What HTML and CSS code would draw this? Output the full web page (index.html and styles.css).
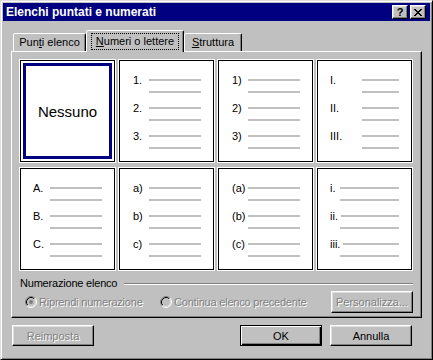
FILE: index.html
```html
<!DOCTYPE html>
<html lang="it">
<head>
<meta charset="utf-8">
<title>Elenchi puntati e numerati</title>
<link rel="stylesheet" href="styles.css">
</head>
<body>
<div class="window">
  <div class="titlebar">
    <span class="title">Elenchi puntati e numerati</span>
    <div class="tb-buttons">
      <span class="tb-btn help">?</span>
      <span class="tb-btn close"><svg width="8" height="7" viewBox="0 0 8 7"><path d="M0 0h2v1H0z M6 0h2v1H6z M1 1h2v1H1z M5 1h2v1H5z M2 2h4v1H2z M3 3h2v1H3z M2 4h4v1H2z M1 5h2v1H1z M5 5h2v1H5z M0 6h2v1H0z M6 6h2v1H6z" fill="#000"/></svg></span>
    </div>
  </div>
  <div class="content">
    <div class="tabs">
      <div class="tab t1">Pun<u>t</u>i elenco</div>
      <div class="tab active t2"><span class="focus"><u>N</u>umeri o lettere</span></div>
      <div class="tab t3"><u>S</u>truttura</div>
    </div>
    <div class="panel">
      <div class="grid">
        <div class="cell selected"><div class="none">Nessuno</div></div>
        <div class="cell list w13 p13">
          <div class="grp"><div class="r1"><span class="lbl">1.</span><span class="ln"></span></div><div class="r2"><span class="ln"></span></div></div>
          <div class="grp"><div class="r1"><span class="lbl">2.</span><span class="ln"></span></div><div class="r2"><span class="ln"></span></div></div>
          <div class="grp"><div class="r1"><span class="lbl">3.</span><span class="ln"></span></div><div class="r2"><span class="ln"></span></div></div>
        </div>
        <div class="cell list w13 p13">
          <div class="grp"><div class="r1"><span class="lbl">1)</span><span class="ln"></span></div><div class="r2"><span class="ln"></span></div></div>
          <div class="grp"><div class="r1"><span class="lbl">2)</span><span class="ln"></span></div><div class="r2"><span class="ln"></span></div></div>
          <div class="grp"><div class="r1"><span class="lbl">3)</span><span class="ln"></span></div><div class="r2"><span class="ln"></span></div></div>
        </div>
        <div class="cell list w29">
          <div class="grp"><div class="r1"><span class="lbl">I.</span><span class="ln"></span></div><div class="r2"><span class="ln"></span></div></div>
          <div class="grp"><div class="r1"><span class="lbl">II.</span><span class="ln"></span></div><div class="r2"><span class="ln"></span></div></div>
          <div class="grp"><div class="r1"><span class="lbl">III.</span><span class="ln"></span></div><div class="r2"><span class="ln"></span></div></div>
        </div>
        <div class="cell list w14">
          <div class="grp"><div class="r1"><span class="lbl">A.</span><span class="ln"></span></div><div class="r2"><span class="ln"></span></div></div>
          <div class="grp"><div class="r1"><span class="lbl">B.</span><span class="ln"></span></div><div class="r2"><span class="ln"></span></div></div>
          <div class="grp"><div class="r1"><span class="lbl">C.</span><span class="ln"></span></div><div class="r2"><span class="ln"></span></div></div>
        </div>
        <div class="cell list w13 p13">
          <div class="grp"><div class="r1"><span class="lbl">a)</span><span class="ln"></span></div><div class="r2"><span class="ln"></span></div></div>
          <div class="grp"><div class="r1"><span class="lbl">b)</span><span class="ln"></span></div><div class="r2"><span class="ln"></span></div></div>
          <div class="grp"><div class="r1"><span class="lbl">c)</span><span class="ln"></span></div><div class="r2"><span class="ln"></span></div></div>
        </div>
        <div class="cell list w13 p13">
          <div class="grp"><div class="r1"><span class="lbl">(a)</span><span class="ln"></span></div><div class="r2"><span class="ln"></span></div></div>
          <div class="grp"><div class="r1"><span class="lbl">(b)</span><span class="ln"></span></div><div class="r2"><span class="ln"></span></div></div>
          <div class="grp"><div class="r1"><span class="lbl">(c)</span><span class="ln"></span></div><div class="r2"><span class="ln"></span></div></div>
        </div>
        <div class="cell list w7">
          <div class="grp"><div class="r1"><span class="lbl">i.</span><span class="ln"></span></div><div class="r2"><span class="ln"></span></div></div>
          <div class="grp"><div class="r1"><span class="lbl">ii.</span><span class="ln"></span></div><div class="r2"><span class="ln"></span></div></div>
          <div class="grp"><div class="r1"><span class="lbl">iii.</span><span class="ln"></span></div><div class="r2"><span class="ln"></span></div></div>
        </div>
      </div>
      <div class="group-head"><span>Numerazione elenco</span><span class="etch"></span></div>
      <div class="radio-row">
        <div class="radio first">
          <svg class="rb" width="12" height="12" viewBox="0 0 12 12"><circle cx="6" cy="6" r="4.5" fill="#c0c0c0"/><path d="M2.11 9.89A5.5 5.5 0 0 1 9.89 2.11" fill="none" stroke="#808080"/><path d="M9.89 2.11A5.5 5.5 0 0 1 2.11 9.89" fill="none" stroke="#fff"/><path d="M2.82 9.18A4.5 4.5 0 0 1 9.18 2.82" fill="none" stroke="#000"/><path d="M9.18 2.82A4.5 4.5 0 0 1 2.82 9.18" fill="none" stroke="#dfdfdf"/><circle cx="6" cy="6" r="2" fill="#808080"/></svg>
          <span class="dis">Riprendi numerazione</span>
        </div>
        <div class="radio">
          <svg class="rb" width="12" height="12" viewBox="0 0 12 12"><circle cx="6" cy="6" r="4.5" fill="#c0c0c0"/><path d="M2.11 9.89A5.5 5.5 0 0 1 9.89 2.11" fill="none" stroke="#808080"/><path d="M9.89 2.11A5.5 5.5 0 0 1 2.11 9.89" fill="none" stroke="#fff"/><path d="M2.82 9.18A4.5 4.5 0 0 1 9.18 2.82" fill="none" stroke="#000"/><path d="M9.18 2.82A4.5 4.5 0 0 1 2.82 9.18" fill="none" stroke="#dfdfdf"/></svg>
          <span class="dis">Continua elenco precedente</span>
        </div>
        <div class="btn disabled personalizza"><span class="dis">Personalizza...</span></div>
      </div>
    </div>
    <div class="bottom">
      <div class="btn disabled"><span class="dis">Reimposta</span></div>
      <div class="btn default">OK</div>
      <div class="btn">Annulla</div>
    </div>
  </div>
</div>
</body>
</html>
```
FILE: styles.css
```css
* { box-sizing: border-box; }
html, body { margin: 0; padding: 0; }
body {
  font-family: "Liberation Sans", Arial, sans-serif;
  font-size: 11px;
  color: #000;
  background: #c0c0c0;
}
.window {
  width: 433px;
  height: 360px;
  background: #c0c0c0;
  border: 1px solid;
  border-color: #dfdfdf #000 #000 #dfdfdf;
  box-shadow: inset 1px 1px 0 #fff, inset -1px -1px 0 #808080;
  padding: 2px;
}
.titlebar {
  height: 18px;
  background: #000080;
  display: flex;
  align-items: center;
  padding: 0 4px 0 3px;
}
.title {
  color: #fff;
  font-weight: bold;
  font-size: 12px;
  flex: 1;
  white-space: nowrap;
}
.tb-buttons { display: flex; gap: 2px; }
.tb-btn {
  width: 16px;
  height: 14px;
  background: #c0c0c0;
  border: 1px solid;
  border-color: #fff #000 #000 #fff;
  box-shadow: inset -1px -1px 0 #808080, inset 1px 1px 0 #dfdfdf;
  display: flex;
  align-items: center;
  justify-content: center;
}
.help { font-weight: bold; font-size: 11px; line-height: 12px; }
.close svg { display: block; }

.content { padding: 9px 8px 0 8px; }

.tabs {
  display: flex;
  align-items: flex-end;
  padding-left: 2px;
  height: 21px;
}
.tab {
  height: 18px;
  background: #c0c0c0;
  border: 1px solid;
  border-bottom: none;
  border-color: #fff #000 transparent #fff;
  border-radius: 2px 2px 0 0;
  box-shadow: inset -1px 0 0 #808080;
  display: flex;
  align-items: center;
  justify-content: center;
  white-space: nowrap;
  padding-bottom: 1px;
}
.t1 { width: 73px; }
.t3 { width: 58px; }
.tab.active {
  width: 98px;
  height: 22px;
  margin-bottom: -1px;
  position: relative;
  z-index: 1;
  align-items: flex-start;
  padding-top: 2px;
}
.focus {
  border: 1px dotted #000;
  padding: 0 4px;
  line-height: 15px;
}

.panel {
  border: 1px solid;
  border-color: #fff #000 #000 #fff;
  box-shadow: inset -1px -1px 0 #808080;
  padding: 8px 8px 4px 8px;
}
.grid {
  display: grid;
  grid-template-columns: repeat(4, 95px);
  grid-auto-rows: 102px;
  column-gap: 4px;
  row-gap: 6px;
}
.cell {
  background: #fff;
  border: 1px solid #000;
  box-shadow: 0 0 0 1px #fff;
}
.cell.selected { padding: 2px; }
.none {
  height: 100%;
  border: 3px solid #000080;
  display: flex;
  align-items: center;
  justify-content: center;
  font-size: 15px;
  padding-top: 1px;
}
.list {
  padding: 13px 12px 0 12px;
  --lw: 14px;
}
.list.p13 { padding-left: 13px; }
.w13 { --lw: 13px; }
.w14 { --lw: 14px; }
.w29 { --lw: 29px; }
.w7 { --lw: 7px; }
.grp { margin-bottom: 4px; }
.r1, .r2 {
  display: flex;
  align-items: center;
  height: 12px;
}
.lbl {
  min-width: var(--lw);
  line-height: 12px;
  white-space: nowrap;
}
.ln {
  flex: 1;
  height: 2px;
  background: #c0c0c0;
  margin-left: 3px;
}
.r2 .ln { margin-left: calc(var(--lw) + 3px); }

.group-head {
  display: flex;
  align-items: center;
  margin-top: 7px;
  line-height: 13px;
  letter-spacing: -0.2px;
}
.etch {
  flex: 1;
  height: 2px;
  border-top: 1px solid #808080;
  border-bottom: 1px solid #fff;
  margin-left: 7px;
}
.radio-row {
  display: flex;
  align-items: center;
  height: 22px;
  margin-top: 1px;
}
.radio {
  display: flex;
  align-items: center;
  gap: 2px;
  white-space: nowrap;
  letter-spacing: -0.2px;
}
.radio.first { width: 135px; margin-left: 5px; }
.rb { display: block; }
.dis { color: #808080; text-shadow: 1px 1px 0 #fff; }

.btn {
  width: 82px;
  height: 21px;
  background: #c0c0c0;
  border: 1px solid;
  border-color: #fff #000 #000 #fff;
  box-shadow: inset -1px -1px 0 #808080, inset 1px 1px 0 #dfdfdf;
  display: flex;
  align-items: center;
  justify-content: center;
  white-space: nowrap;
}
.personalizza { margin-left: auto; height: 22px; }
.btn.default {
  border: 1px solid #000;
  box-shadow: inset 1px 1px 0 #fff, inset -1px -1px 0 #000, inset -2px -2px 0 #808080;
}
.bottom {
  display: flex;
  gap: 8px;
  margin-top: 7px;
  padding: 0 10px 0 1px;
}
.bottom .default { margin-left: auto; }
```
